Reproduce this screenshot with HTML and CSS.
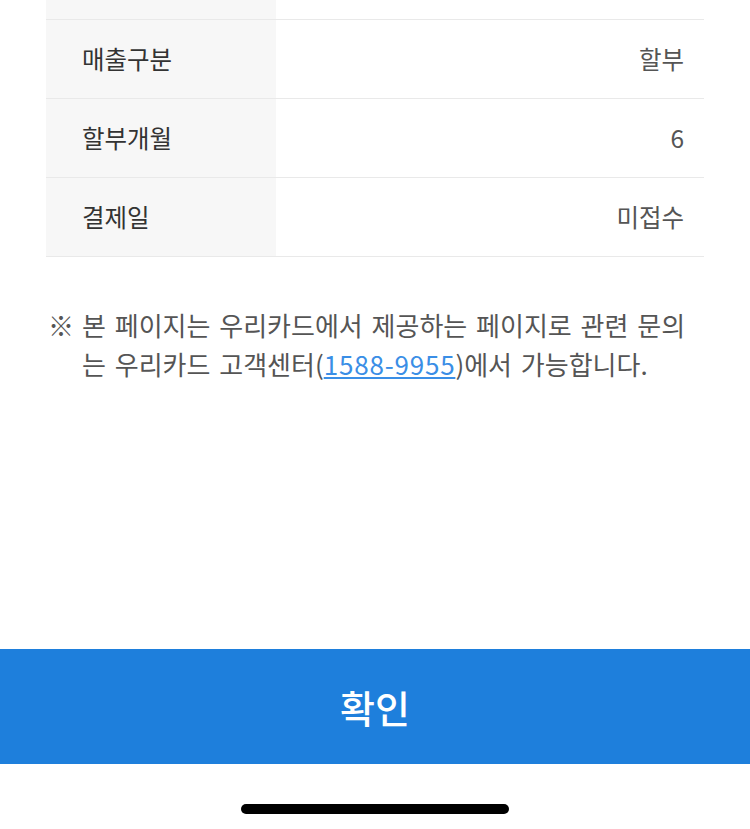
FILE: index.html
```html
<html>

<head>
    <meta charset="UTF-8">
    <meta name="viewport" content="width=device-width, initial-scale=1.0">
    <title>결제 상세</title>

    <link rel="stylesheet" href="styles.css">
</head>

<body>
    <div class="page">
        <div class="content">
            <table class="info">
                <tr class="cut">
                    <th></th>
                    <td></td>
                </tr>
                <tr>
                    <th>매출구분</th>
                    <td>할부</td>
                </tr>
                <tr>
                    <th>할부개월</th>
                    <td>6</td>
                </tr>
                <tr>
                    <th>결제일</th>
                    <td>미접수</td>
                </tr>
            </table>

            <p class="notice">
                <span class="mark">※</span>
                <span>본 페이지는 우리카드에서 제공하는 페이지로 관련 문의는 우리카드 고객센터(<a href="#">1588-9955</a>)에서 가능합니다.</span>
            </p>
        </div>

        <button class="confirm">확인</button>

        <div class="home">
            <div class="home-bar"></div>
        </div>
    </div>
</body>

</html>
```

FILE: styles.css
```css
* {
    box-sizing: border-box;
}

body {
    margin: 0;
    background-color: #ffffff;
    font-family: "Noto Sans CJK KR", "Noto Sans", sans-serif;
}

.page {
    display: flex;
    flex-direction: column;
    height: 100vh;
}

.content {
    flex: 1;
    padding: 0 46px;
}

.info {
    width: 100%;
    border-collapse: collapse;
    font-size: 24.5px;
}

.info th,
.info td {
    height: 79px;
    border-bottom: 1px solid #e9e9e9;
    padding: 0;
    font-weight: 400;
}

.info th {
    width: 230px;
    background-color: #f7f7f7;
    color: #333333;
    text-align: left;
    padding-left: 36px;
}

.info td {
    color: #555555;
    text-align: right;
    padding-right: 20px;
}

.info .cut th,
.info .cut td {
    height: 19px;
}

.notice {
    display: flex;
    margin: 48px 0 0 2px;
    font-size: 26px;
    line-height: 39px;
    word-spacing: 3px;
    color: #555555;
}

.mark {
    flex: none;
    width: 34px;
}

.notice a {
    color: #3a8ee6;
    text-decoration: underline;
    letter-spacing: 0.8px;
}

.confirm {
    display: block;
    width: 100%;
    height: 115px;
    border: none;
    background-color: #1e7fdc;
    color: #ffffff;
    font-family: inherit;
    font-size: 38px;
    font-weight: 500;
}

.home {
    height: 65px;
    display: flex;
    justify-content: center;
    align-items: flex-end;
    padding-bottom: 15px;
}

.home-bar {
    width: 268px;
    height: 10px;
    border-radius: 5px;
    background-color: #000000;
}
```
